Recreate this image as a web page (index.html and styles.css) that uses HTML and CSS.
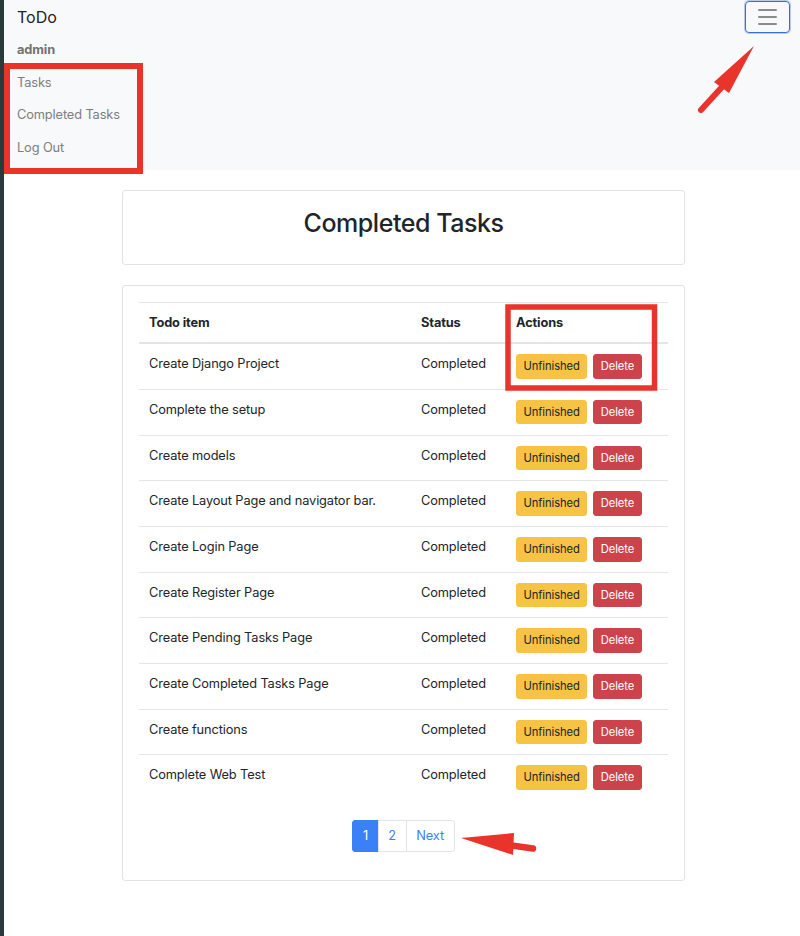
FILE: index.html
```html
<!DOCTYPE html>
<html lang="en">
<head>
<meta charset="utf-8">
<title>ToDo</title>
<link rel="stylesheet" href="styles.css">
</head>
<body>
<div class="page">
  <nav class="navbar">
    <div class="nav-top">
      <a class="brand" href="#">ToDo</a>
      <button class="toggler" type="button" aria-label="Toggle navigation">
        <span class="bar"></span><span class="bar"></span><span class="bar"></span>
      </button>
    </div>
    <ul class="nav-list">
      <li class="nav-user">admin</li>
      <li><a class="nav-link" href="#">Tasks</a></li>
      <li><a class="nav-link" href="#">Completed Tasks</a></li>
      <li><a class="nav-link" href="#">Log Out</a></li>
    </ul>
  </nav>

  <main class="container">
    <section class="card title-card">
      <h2 class="title">Completed Tasks</h2>
    </section>

    <section class="card table-card">
      <table class="table">
        <thead>
          <tr><th class="c1">Todo item</th><th class="c2">Status</th><th class="c3">Actions</th></tr>
        </thead>
        <tbody>
          <tr><td>Create Django Project</td><td>Completed</td><td><div class="actions"><a class="btn btn-warning">Unfinished</a><a class="btn btn-danger">Delete</a></div></td></tr>
          <tr><td>Complete the setup</td><td>Completed</td><td><div class="actions"><a class="btn btn-warning">Unfinished</a><a class="btn btn-danger">Delete</a></div></td></tr>
          <tr><td>Create models</td><td>Completed</td><td><div class="actions"><a class="btn btn-warning">Unfinished</a><a class="btn btn-danger">Delete</a></div></td></tr>
          <tr><td>Create Layout Page and navigator bar.</td><td>Completed</td><td><div class="actions"><a class="btn btn-warning">Unfinished</a><a class="btn btn-danger">Delete</a></div></td></tr>
          <tr><td>Create Login Page</td><td>Completed</td><td><div class="actions"><a class="btn btn-warning">Unfinished</a><a class="btn btn-danger">Delete</a></div></td></tr>
          <tr><td>Create Register Page</td><td>Completed</td><td><div class="actions"><a class="btn btn-warning">Unfinished</a><a class="btn btn-danger">Delete</a></div></td></tr>
          <tr><td>Create Pending Tasks Page</td><td>Completed</td><td><div class="actions"><a class="btn btn-warning">Unfinished</a><a class="btn btn-danger">Delete</a></div></td></tr>
          <tr><td>Create Completed Tasks Page</td><td>Completed</td><td><div class="actions"><a class="btn btn-warning">Unfinished</a><a class="btn btn-danger">Delete</a></div></td></tr>
          <tr><td>Create functions</td><td>Completed</td><td><div class="actions"><a class="btn btn-warning">Unfinished</a><a class="btn btn-danger">Delete</a></div></td></tr>
          <tr><td>Complete Web Test</td><td>Completed</td><td><div class="actions"><a class="btn btn-warning">Unfinished</a><a class="btn btn-danger">Delete</a></div></td></tr>
        </tbody>
      </table>
      <ul class="pagination">
        <li class="page-item active"><a class="page-link" href="#">1</a></li>
        <li class="page-item"><a class="page-link" href="#">2</a></li>
        <li class="page-item"><a class="page-link" href="#">Next</a></li>
      </ul>
    </section>
  </main>
</div>

<svg class="annotations" width="800" height="936" viewBox="0 0 800 936" aria-hidden="true">
  <rect x="7" y="66" width="133" height="105" fill="none" stroke="#e8342a" stroke-width="6"/>
  <rect x="508" y="307" width="146.5" height="81" fill="none" stroke="#e8342a" stroke-width="5.5"/>
  <line x1="701" y1="110" x2="722" y2="87" stroke="#e8342a" stroke-width="6" stroke-linecap="round"/>
  <polygon points="754,46 714,82 729,93" fill="#e8342a"/>
  <line x1="533" y1="848.5" x2="508" y2="845" stroke="#e8342a" stroke-width="6.5" stroke-linecap="round"/>
  <polygon points="461,838 514,833 513,855" fill="#e8342a"/>
</svg>
</body>
</html>
```

FILE: styles.css
```css
* { box-sizing: border-box; }

html, body {
  margin: 0;
  padding: 0;
}

body {
  width: 800px;
  height: 936px;
  overflow: hidden;
  background: #ffffff;
  border-left: 4px solid #283a3a;
  font-family: Inter, "Noto Sans", "Liberation Sans", sans-serif;
  font-size: 12.8px;
  line-height: 1.5;
  letter-spacing: -0.12px;
  color: #212529;
  position: relative;
}

a { text-decoration: none; }

.navbar {
  background: #f8f9fa;
  padding: 1px 10px 7px 13px;
  height: 170px;
}

.nav-top {
  display: flex;
  align-items: center;
  justify-content: space-between;
  height: 32px;
}

.brand {
  font-size: 16px;
  line-height: 24px;
  color: #1f2226;
  letter-spacing: 0;
}

.toggler {
  width: 45px;
  height: 32px;
  border: 1px solid #3a6fd2;
  border-radius: 4px;
  background: transparent;
  box-shadow: 0 0 0 1px rgba(58, 111, 210, 0.35);
  display: flex;
  flex-direction: column;
  align-items: center;
  justify-content: center;
  gap: 5px;
  padding: 0;
}

.toggler .bar {
  display: block;
  width: 19px;
  height: 2px;
  background: #8a8b8c;
  border-radius: 1px;
}

.nav-list {
  list-style: none;
  margin: 0;
  padding: 0;
}

.nav-user,
.nav-link {
  display: block;
  padding: 6.7px 0 6.6px;
  line-height: 19.2px;
  color: #7d7e80;
}

.nav-user {
  font-weight: 700;
  color: #717274;
  padding-bottom: 7.4px;
}

.container {
  display: flex;
  flex-direction: column;
  align-items: center;
  padding: 20px 0 0 3px;
  gap: 20px;
}

.card {
  width: 563px;
  background: #fff;
  border: 1px solid #e1e2e3;
  border-radius: 3px;
}

.title-card {
  height: 75px;
  display: flex;
  justify-content: center;
  padding-top: 17px;
}

.title {
  margin: 0;
  font-size: 25px;
  font-weight: 500;
  line-height: 30px;
  color: #212529;
  letter-spacing: -0.45px;
}

.table-card {
  padding: 16px 16px 28px;
}

.table {
  width: 100%;
  border-collapse: collapse;
  margin-bottom: 20px;
}

.table th,
.table td {
  text-align: left;
  vertical-align: top;
  padding: 10px 10px;
  border-top: 1px solid #e3e5e8;
  line-height: 19.2px;
}

.table td {
  padding-top: 10.1px;
  padding-bottom: 10.1px;
}

.table th {
  font-weight: 700;
  border-bottom: 2px solid #e3e5e8;
}

.table thead + tbody tr:first-child td { border-top: 0; }

.c1 { width: 272px; }
.c2 { width: 95px; }

.actions {
  display: flex;
  gap: 6px;
}

.btn {
  display: inline-block;
  font-size: 11.2px;
  line-height: 16.8px;
  padding: 3px 6.4px;
  border: 1px solid transparent;
  border-radius: 3px;
  height: 24.5px;
  letter-spacing: -0.05px;
}

.btn-warning {
  background: #f6c344;
  border-color: #f6c344;
  color: #212529;
}

.btn-danger {
  background: #cd434b;
  border-color: #cd434b;
  color: #ffffff;
}

.pagination {
  list-style: none;
  margin: 0;
  padding: 0;
  display: flex;
  justify-content: center;
}

.page-link {
  display: block;
  padding: 7px 9.6px;
  line-height: 16px;
  font-size: 12.8px;
  color: #3b7ff5;
  background: #fff;
  border: 1px solid #e2e4e7;
  margin-left: -1px;
}

.page-item:first-child .page-link {
  margin-left: 0;
  border-radius: 3px 0 0 3px;
}

.page-item:last-child .page-link {
  border-radius: 0 3px 3px 0;
}

.page-item.active .page-link {
  background: #3a80f6;
  border-color: #3a80f6;
  color: #fff;
}

.annotations {
  position: absolute;
  left: -4px;
  top: 0;
  pointer-events: none;
}
```
